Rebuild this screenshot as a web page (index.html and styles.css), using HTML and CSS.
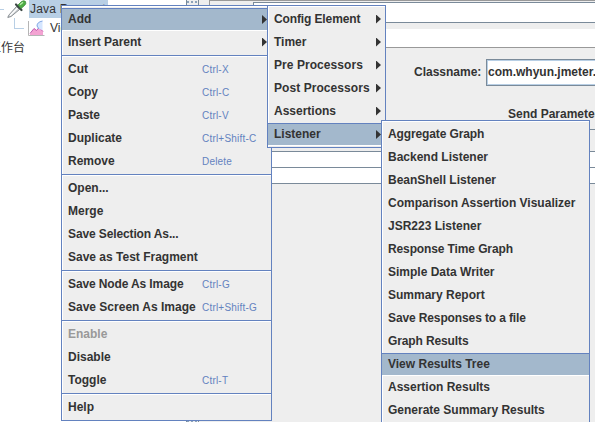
FILE: index.html
```html
<!DOCTYPE html>
<html lang="en">
<head>
<meta charset="utf-8">
<title>JMeter</title>
<link rel="stylesheet" href="styles.css">
</head>
<body>
<main class="app">
  <aside class="tree">
    <div class="node">
      <span class="branch"></span>
      <svg class="pipette" width="20" height="19" viewBox="0 0 20 19"><path d="M.8 17.500 1.500 15.500 9.500 6.500 12.500 9.500 4 16.500Z" fill="#cfd3d6" stroke="#80868a" stroke-width=".9"/><path d="M3 15.500 10.500 8" stroke="#fff" stroke-width="1.300"/><path d="M9 4.500 14.500 10" stroke="#3c4844" stroke-width="2.200" stroke-linecap="round"/><path d="M11 5 14.500 1.500Q17 0 18.500 1.500 19.500 3.500 17.500 5.500L14 8.500Z" fill="#4fae45" stroke="#3d8a3b" stroke-width=".8"/><path d="M13 4.800 16 2.200" stroke="#b9ecac" stroke-width="1.300"/></svg>
      <span class="selected">Java Request</span>
    </div>
    <div class="node child">
      <span class="elbow"></span>
      <svg class="graph" width="17" height="17" viewBox="0 0 17 17"><path d="M2 14 6 8.500 8.500 10.500 11 7.500 15 11.500V15H2Z" fill="#f3a3d2"/><path d="M2 13.500 6 8.500 8.500 10.500 11 7.500 15 11.500" fill="none" stroke="#c052ac"/><path d="M14.500 1Q9 2 9 6L11 9 14.500 10Z" fill="#d5e6ff"/><path d="M14.500 1Q9 2 9 6L11 9" fill="none" stroke="#7fa5e4"/><path d="M.5 1V15.500H16.500" fill="none" stroke="#b5b5b5"/></svg>
      <span>View Results Tree</span>
    </div>
    <div class="bench">工作台</div>
  </aside>
  <div class="splitter"></div>
  <section class="panel">
    <div class="titled">
      <div class="field name"></div>
    </div>
    <div class="field comment"></div>
    <div class="classrow"><label>Classname:</label><div class="input">com.whyun.jmeter.</div></div>
    <div class="caption">Send Parameters</div>
    <div class="table"><i></i><i></i><i></i></div>
  </section>
</main>

<nav class="menu main-menu">
  <div class="item active"><span>Add</span><b></b></div>
  <div class="item"><span>Insert Parent</span><b></b></div>
  <hr>
  <div class="item"><span>Cut</span><kbd>Ctrl-X</kbd></div>
  <div class="item"><span>Copy</span><kbd>Ctrl-C</kbd></div>
  <div class="item"><span>Paste</span><kbd>Ctrl-V</kbd></div>
  <div class="item"><span>Duplicate</span><kbd>Ctrl+Shift-C</kbd></div>
  <div class="item"><span>Remove</span><kbd>Delete</kbd></div>
  <hr>
  <div class="item"><span>Open...</span></div>
  <div class="item"><span>Merge</span></div>
  <div class="item tight"><span>Save Selection As...</span></div>
  <div class="item"><span>Save as Test Fragment</span></div>
  <hr>
  <div class="item tight"><span>Save Node As Image</span><kbd>Ctrl-G</kbd></div>
  <div class="item"><span>Save Screen As Image</span><kbd>Ctrl+Shift-G</kbd></div>
  <hr>
  <div class="item disabled"><span>Enable</span></div>
  <div class="item"><span>Disable</span></div>
  <div class="item"><span>Toggle</span><kbd>Ctrl-T</kbd></div>
  <hr>
  <div class="item"><span>Help</span></div>
</nav>

<nav class="menu add-menu">
  <div class="item tight"><span>Config Element</span><b></b></div>
  <div class="item"><span>Timer</span><b></b></div>
  <div class="item loose"><span>Pre Processors</span><b></b></div>
  <div class="item loose"><span>Post Processors</span><b></b></div>
  <div class="item"><span>Assertions</span><b></b></div>
  <div class="item active"><span>Listener</span><b></b></div>
</nav>

<nav class="menu listener-menu">
  <div class="item tight"><span>Aggregate Graph</span></div>
  <div class="item"><span>Backend Listener</span></div>
  <div class="item"><span>BeanShell Listener</span></div>
  <div class="item"><span>Comparison Assertion Visualizer</span></div>
  <div class="item"><span>JSR223 Listener</span></div>
  <div class="item tight"><span>Response Time Graph</span></div>
  <div class="item"><span>Simple Data Writer</span></div>
  <div class="item"><span>Summary Report</span></div>
  <div class="item tight"><span>Save Responses to a file</span></div>
  <div class="item tight"><span>Graph Results</span></div>
  <div class="item active"><span>View Results Tree</span></div>
  <div class="item"><span>Assertion Results</span></div>
  <div class="item"><span>Generate Summary Results</span></div>
</nav>
</body>
</html>
```
FILE: styles.css
```css
* { box-sizing: border-box; }
body { margin: 0; width: 595px; height: 422px; overflow: hidden; position: relative; background: #eee; color: #333; font: bold 12px "Liberation Sans", "Noto Sans CJK SC", sans-serif; }
.app { display: flex; height: 422px; }
.tree { width: 187px; flex: none; background: #fff; border-right: 1px solid #7a8a99; overflow: hidden; font-weight: normal; }
.node { display: flex; height: 18px; white-space: nowrap; }
.branch { width: 4px; height: 10px; margin-right: 3px; border-bottom: 1px solid #b8cfe5; }
.elbow { width: 10px; height: 11px; margin: 0 4px 0 14px; border: solid #b8cfe5; border-width: 0 0 1px 1px; }
.graph { margin: 2px 5px 0 0; }
.selected { width: 79px; height: 18px; margin-left: 2px; padding-left: 1px; background: #b8cfe5; line-height: 18px; letter-spacing: .2px; }
.child { height: 20px; line-height: 20px; }
.bench { margin-left: -11px; line-height: 20px; }
.splitter { width: 12px; flex: none; border-right: 1px solid #7a8a99; background: radial-gradient(circle, #8aa0b8 0.7px, transparent 1px) 3px 0 / 4px 4px; }
.panel { flex: 1; min-width: 0; padding-left: 10px; overflow: hidden; }
.titled { height: 23px; padding: 1px 0 0 43px; border: solid #999; border-width: 1px 0 0 1px; }
.field { background: #fff; }
.name { height: 21px; border: solid #7a8a99; border-width: 1px 0 1px 1px; }
.comment { height: 19px; margin-top: 6px; border-bottom: 1px solid #999; }
.classrow { display: flex; align-items: center; height: 27px; margin: 11px 0 0 205px; }
.classrow label { width: 72px; line-height: 25px; }
.input { flex: 1; height: 27px; padding-left: 1px; line-height: 25px; background: #fff; border: 1px solid #7a8a99; border-right: 0; box-shadow: inset 1px 1px #b8cfe5, inset 0 -1px #b8cfe5; overflow: hidden; }
.caption { margin: 19px 0 0 299px; height: 18px; line-height: 18px; white-space: nowrap; }
.table { margin-top: 6px; border-top: 1px solid #7a8a99; }
.table i { display: block; height: 16px; background: #fff; border-bottom: 1px solid #7a8a99; }
.table i:first-child { height: 22px; background: #eee; }
.menu { position: absolute; padding: 2px 0 1px; background: #eee; border: 1px solid #6382bf; box-shadow: inset 1px 1px #fff; }
.main-menu { left: 61px; top: 5px; width: 211px; height: 416px; }
.add-menu { left: 267px; top: 5px; width: 119px; height: 143px; }
.listener-menu { left: 381px; top: 120px; width: 209px; height: 302px; border-bottom: 0; padding-bottom: 0; overflow: hidden; }
.item { display: flex; align-items: center; height: 23px; padding: 0 4px 1px 6px; line-height: 21px; white-space: nowrap; }
.item span { flex: 1; }
.item kbd { width: 65px; font: 10px "Liberation Sans", sans-serif; letter-spacing: .2px; color: #6382bf; }
.item b { width: 5px; height: 9px; background: #333; clip-path: polygon(0 0, 100% 50%, 0 100%); }
.active { background: #a3b8cc; border-top: 1px solid #6382bf; border-bottom: 1px solid #fff; padding-bottom: 0; }
.disabled { color: #999; }
.tight { letter-spacing: -.12px; }
.loose { letter-spacing: .06px; }
hr { height: 4px; margin: 0; border: 0; background: linear-gradient(transparent 1px, #6382bf 1px 2px, #fff 2px 3px, transparent 3px); }
```
